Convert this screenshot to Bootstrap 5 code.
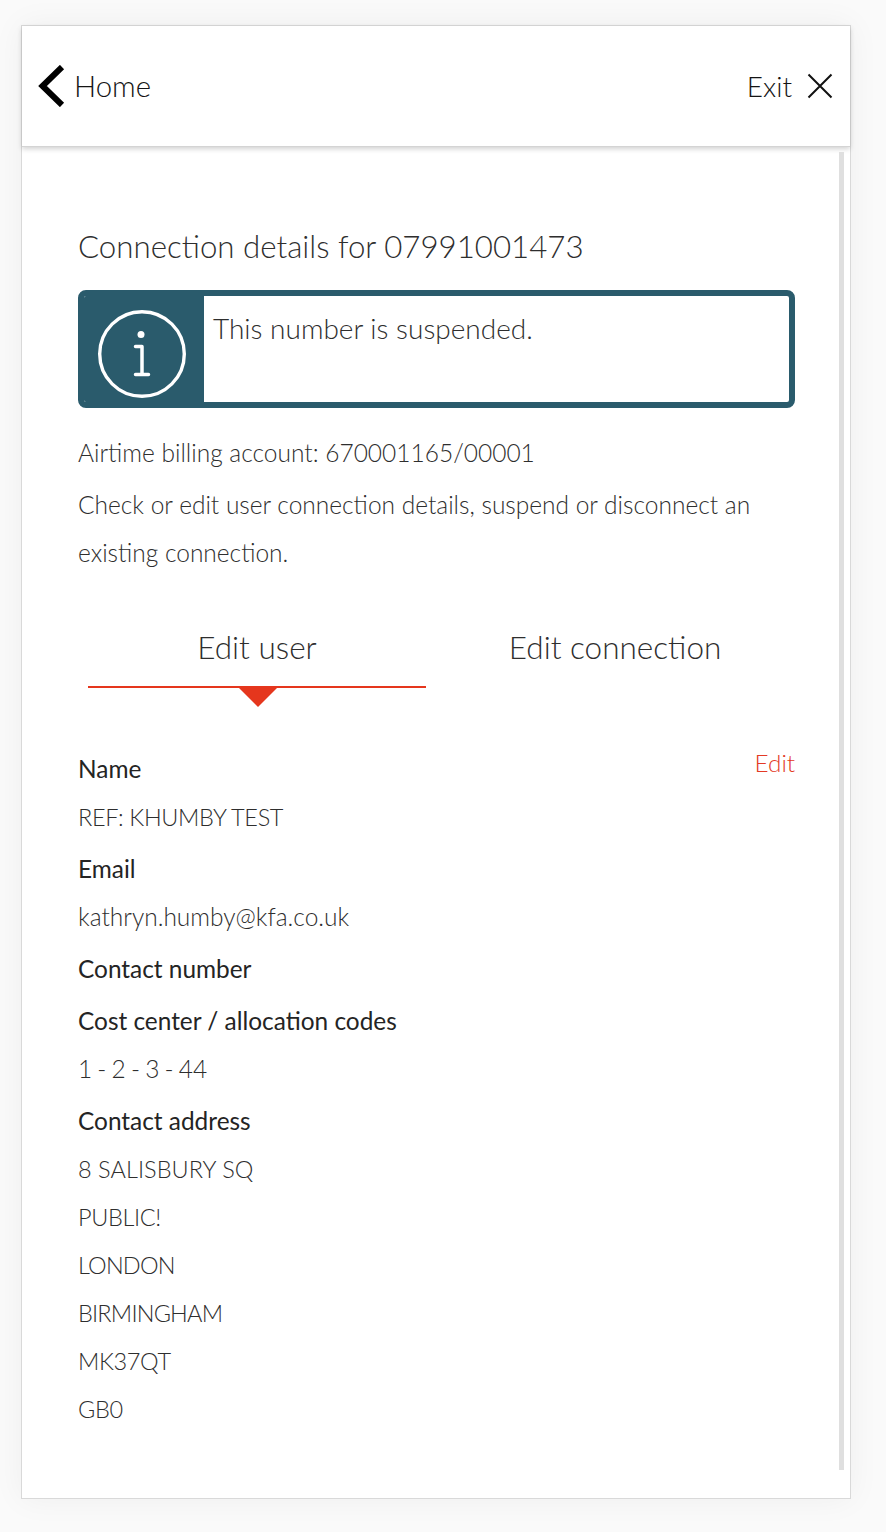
<!doctype html>
<html lang="en"><head><meta charset="utf-8"><title>Connection details</title>
<link href="https://cdn.jsdelivr.net/npm/bootstrap@5.3.0/dist/css/bootstrap.min.css" rel="stylesheet">
<style>
html,body{height:100%}
body{background:#fafafa;font-family:Lato,"Liberation Sans",sans-serif;font-weight:300;color:#2e2e2e;margin:0;padding:25px 35px 33px 21px;overflow:hidden}
.panel-box{width:830px;height:1474px;background:#fff;border:1px solid #d9d9d9;box-shadow:0 0 30px rgba(0,0,0,.05)}
.top-bar{height:121px;padding:0 17px 0 16px;border-bottom:1px solid #d4d4d4;box-shadow:0 2px 5px rgba(0,0,0,.18);font-size:29.4px;color:#141414}
.top-bar svg{display:block}
.exit-group{gap:15px}
.exit-word{font-size:28px}
.body-wrap{flex:1;min-height:0;padding:5px 6px 28px 0}
.scroll-rail{width:6px;background:#dfdfdf}
.content-col{padding:72px 44px 0 56px}
.heading-line{font-size:31.25px;line-height:44px;margin:0 0 22px;font-weight:300;color:#2e2e2e}
.notice{height:118px;border:6px solid #2a5b6c;border-radius:8px;background:#fff;margin-bottom:21px;overflow:hidden}
.notice-icon{width:126px;background:#2a5b6c;margin:-6px 0 -6px -6px;padding:9px 0 0 2px}
.notice-text{font-size:28px;line-height:34px;padding:15px 9px 0}
.para{font-size:24.5px;line-height:48px;margin:0}
.para-tight{margin-bottom:4px}
.tab-row{margin-top:40px;height:90px}
.tab-item{font-size:31.5px;line-height:44px;text-align:center;color:#2e2e2e;position:relative;padding-top:8px}
.tab-on{width:338px;margin-left:10px;height:71px;border-bottom:2px solid #e5361d}
.tab-on::after{content:"";position:absolute;left:150px;top:70px;border:20px solid transparent;border-top-color:#e5361d;border-bottom:0}
.tab-off{flex:1;margin-left:9px}
.detail{margin-top:38px}
.field-label{font-size:24.4px;line-height:48px;font-weight:400;margin:4px 0 0;color:#242424}
.field-value{font-size:24.5px;line-height:48px;margin:0}
.caps-value{font-size:23.5px;letter-spacing:-.35px}
.caps-tight{letter-spacing:-.8px}
.caps-loose{letter-spacing:.05px}
.num-value{word-spacing:-1.5px}
.edit-link{color:#e33a25;font-size:24.3px;line-height:36px;text-decoration:none;position:absolute;right:0;top:0}
</style></head><body>
<div class="panel-box d-flex flex-column">
 <div class="top-bar d-flex align-items-center justify-content-between">
  <div class="d-flex align-items-center gap-2">
   <svg width="28" height="42" viewBox="0 0 28 42"><path d="M24 2 4.500 21 24 40" fill="none" stroke="#000" stroke-width="6"/></svg>
   <span>Home</span>
  </div>
  <div class="d-flex align-items-center exit-group">
   <span class="exit-word">Exit</span>
   <svg width="26" height="26" viewBox="0 0 26 26"><path d="M1.500 1.500l23 23M24.500 1.500l-23 23" fill="none" stroke="#111" stroke-width="2"/></svg>
  </div>
 </div>
 <div class="body-wrap d-flex">
  <div class="content-col flex-grow-1">
   <h1 class="heading-line">Connection details for 07991001473</h1>
   <div class="notice d-flex">
    <div class="notice-icon d-flex align-items-center justify-content-center">
     <svg width="90" height="90" viewBox="0 0 90 90"><circle cx="45" cy="45" r="42.300" fill="none" stroke="#fff" stroke-width="3.400"/><circle cx="44" cy="25.500" r="3.500" fill="#fff"/><path d="M38.500 37.500H45v28M38.500 65.500h13" fill="none" stroke="#fff" stroke-width="3.500" stroke-linecap="round" stroke-linejoin="round"/></svg>
    </div>
    <div class="notice-text">This number is suspended.</div>
   </div>
   <p class="para para-tight">Airtime billing account: 670001165/00001</p>
   <p class="para">Check or edit user connection details, suspend or disconnect an existing connection.</p>
   <div class="tab-row d-flex">
    <div class="tab-item tab-on">Edit user</div>
    <div class="tab-item tab-off">Edit connection</div>
   </div>
   <div class="detail position-relative">
    <a class="edit-link" href="#">Edit</a>
    <p class="field-label">Name</p><p class="field-value caps-value">REF: KHUMBY TEST</p>
    <p class="field-label">Email</p><p class="field-value">kathryn.humby@kfa.co.uk</p>
    <p class="field-label">Contact number</p>
    <p class="field-label">Cost center / allocation codes</p><p class="field-value num-value">1 - 2 - 3 - 44</p>
    <p class="field-label">Contact address</p>
    <p class="field-value caps-value caps-loose">8 SALISBURY SQ</p><p class="field-value caps-value">PUBLIC!</p><p class="field-value caps-value caps-tight">LONDON</p><p class="field-value caps-value caps-tight">BIRMINGHAM</p><p class="field-value caps-value">MK37QT</p><p class="field-value caps-value">GB0</p>
   </div>
  </div>
  <div class="scroll-rail"></div>
 </div>
</div>
</body></html>
